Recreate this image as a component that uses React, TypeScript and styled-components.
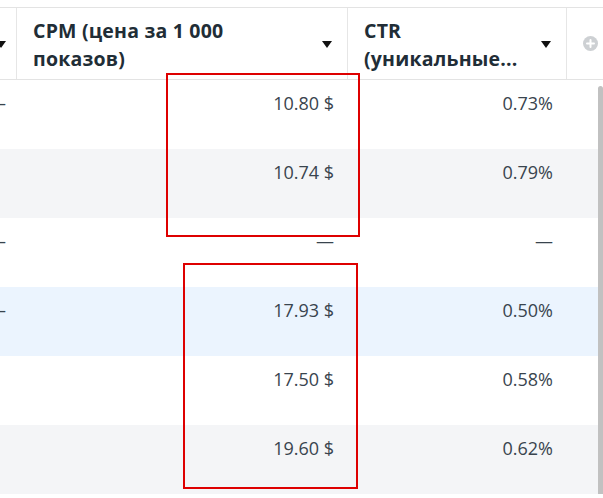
import React from "react";
import styled, { createGlobalStyle } from "styled-components";

const GlobalStyle = createGlobalStyle`
  html, body { margin: 0; padding: 0; background: #ffffff; overflow: hidden; }
  * { box-sizing: border-box; }
`;

const COLS = "16px 331px 219px 1fr";

const Page = styled.div`
  position: relative;
  width: 603px;
  height: 498px;
  padding-top: 7px;
  background: #fff;
  overflow: hidden;
`;

const HeaderRow = styled.div`
  display: grid;
  grid-template-columns: ${COLS};
  height: 73px;
  border-top: 1px solid #e3e3e3;
  border-bottom: 1px solid #e3e3e3;
`;

const HeaderCell = styled.div<{ $first?: boolean }>`
  display: flex;
  align-items: center;
  justify-content: ${(p) => (p.$first ? "flex-end" : "space-between")};
  gap: 8px;
  padding: 0 ${(p) => (p.$first ? "10px" : "15px")} 0 ${(p) => (p.$first ? "0" : "16px")};
  border-left: ${(p) => (p.$first ? "none" : "1px solid #e6e6e6")};
  overflow: hidden;
`;

const HeaderTitle = styled.div`
  font-family: "Open Sans", "Noto Sans", sans-serif;
  font-weight: 700;
  font-size: 19.5px;
  letter-spacing: 0.2px;
  line-height: 28px;
  color: #212d36;
  padding-top: 2px;
`;

const SortArrow = styled.span`
  flex: none;
  width: 0;
  height: 0;
  border-left: 5.5px solid transparent;
  border-right: 5.5px solid transparent;
  border-top: 7px solid #111;
  margin-top: 2px;
`;

const AddCell = styled.div`
  display: flex;
  align-items: center;
  padding-left: 16px;
  border-left: 1px solid #e6e6e6;
`;

const Body = styled.div`
  display: flex;
`;

const Rows = styled.div`
  width: 598px;
  display: flex;
  flex-direction: column;
`;

const Row = styled.div<{ $bg: string }>`
  display: grid;
  grid-template-columns: ${COLS};
  height: 69px;
  background: ${(p) => p.$bg};
`;

const Cell = styled.div`
  font-family: "Open Sans", "Noto Sans", sans-serif;
  font-size: 18px;
  line-height: 24px;
  color: #39444e;
  text-align: right;
  padding: 11px 13px 0 0;
  white-space: nowrap;
  overflow: hidden;
`;

const EdgeCell = styled.div`
  display: flex;
  justify-content: flex-end;
  font-family: "Open Sans", "Noto Sans", sans-serif;
  font-size: 18px;
  line-height: 24px;
  color: #39444e;
  padding: 11px 10px 0 0;
  white-space: nowrap;
  overflow: hidden;
`;

const ScrollTrack = styled.div`
  width: 5px;
  display: flex;
  flex-direction: column;
  padding-top: 6px;
`;

const Thumb = styled.div`
  flex: 1;
  background: #c1c1c1;
  border-radius: 3px 3px 0 0;
`;

const Highlight = styled.div<{ $l: number; $t: number; $w: number; $h: number }>`
  position: absolute;
  left: ${(p) => p.$l}px;
  top: ${(p) => p.$t}px;
  width: ${(p) => p.$w}px;
  height: ${(p) => p.$h}px;
  border: 2px solid #de0000;
  pointer-events: none;
`;

const PlusIcon = () => (
  <svg width="15" height="15" viewBox="0 0 15 15">
    <circle cx="7.5" cy="7.5" r="7.5" fill="#cdd0d3" />
    <path d="M7.5 4v7M4 7.5h7" stroke="#fff" strokeWidth="2" strokeLinecap="round" />
  </svg>
);

type RowData = { edge: string; cpm: string; ctr: string; bg: string };

const rows: RowData[] = [
  { edge: "–", cpm: "10.80 $", ctr: "0.73%", bg: "#ffffff" },
  { edge: "", cpm: "10.74 $", ctr: "0.79%", bg: "#f4f5f7" },
  { edge: "–", cpm: "—", ctr: "—", bg: "#ffffff" },
  { edge: "–", cpm: "17.93 $", ctr: "0.50%", bg: "#ebf4fe" },
  { edge: "", cpm: "17.50 $", ctr: "0.58%", bg: "#ffffff" },
  { edge: "", cpm: "19.60 $", ctr: "0.62%", bg: "#f4f5f7" },
];

export default function App() {
  return (
    <>
      <GlobalStyle />
      <Page>
        <HeaderRow>
          <HeaderCell $first>
            <SortArrow />
          </HeaderCell>
          <HeaderCell>
            <HeaderTitle>
              CPM (цена за 1 000
              <br />
              показов)
            </HeaderTitle>
            <SortArrow />
          </HeaderCell>
          <HeaderCell>
            <HeaderTitle>
              CTR
              <br />
              (уникальные...
            </HeaderTitle>
            <SortArrow />
          </HeaderCell>
          <AddCell>
            <PlusIcon />
          </AddCell>
        </HeaderRow>
        <Body>
          <Rows>
            {rows.map((r, i) => (
              <Row key={i} $bg={r.bg}>
                <EdgeCell>{r.edge}</EdgeCell>
                <Cell>{r.cpm}</Cell>
                <Cell>{r.ctr}</Cell>
                <Cell />
              </Row>
            ))}
          </Rows>
          <ScrollTrack>
            <Thumb />
          </ScrollTrack>
        </Body>
        <Highlight $l={166} $t={73} $w={194} $h={164} />
        <Highlight $l={183} $t={263} $w={175} $h={226} />
      </Page>
    </>
  );
}
